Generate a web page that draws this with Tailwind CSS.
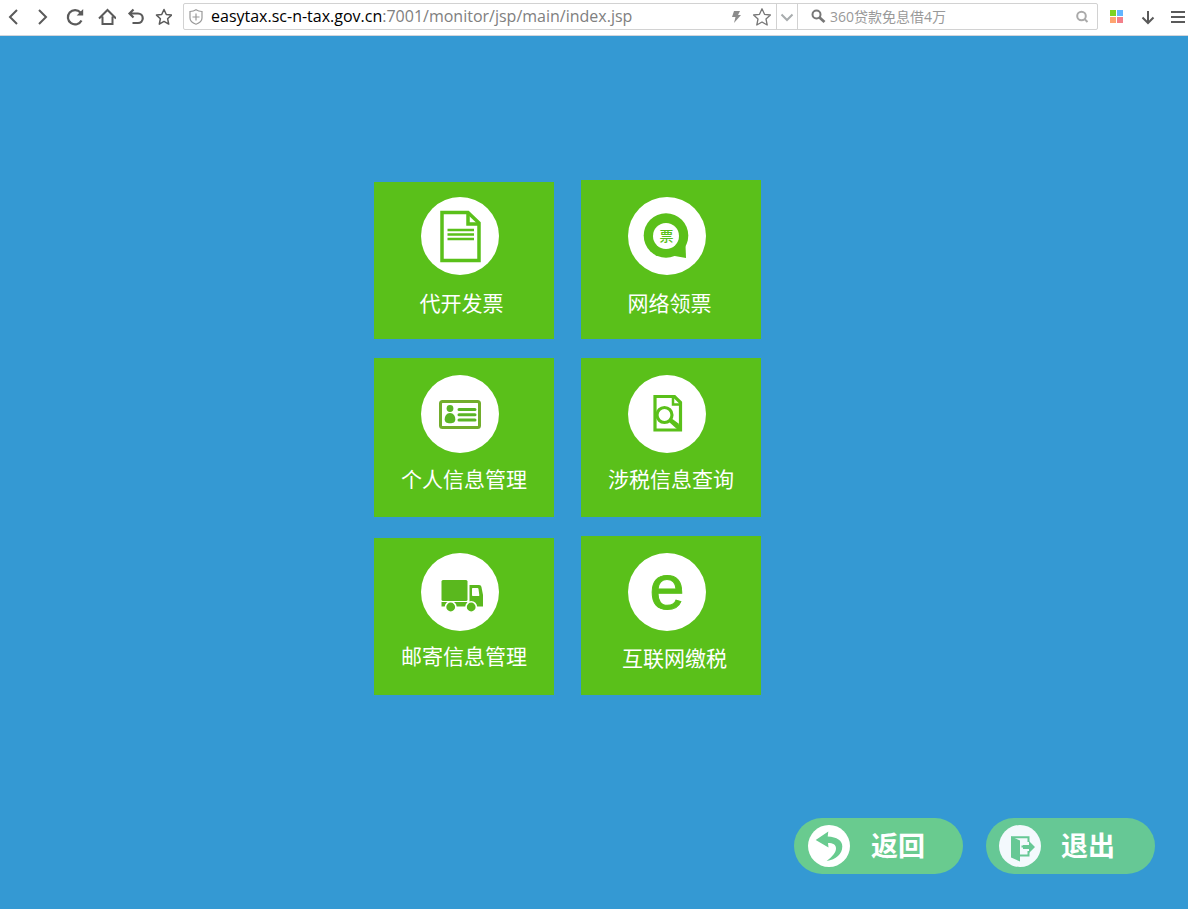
<!DOCTYPE html>
<html lang="zh-CN">
<head>
<meta charset="utf-8">
<meta name="viewport" content="width=device-width, initial-scale=1">
<title>网上办税</title>
<script src="https://cdn.jsdelivr.net/npm/@tailwindcss/browser@4"></script>
</head>
<body class="flex min-h-screen flex-col bg-[#3499d3] font-['Open_Sans','Noto_Sans_CJK_SC',sans-serif]">

<header class="flex h-9 shrink-0 items-center border-b border-gray-300 bg-white pr-[2px] pb-[2px] pl-1 text-[#5a5a5a]">
  <nav class="flex items-center" aria-label="浏览器导航">
    <button type="button" aria-label="后退" class="mr-2"><svg class="size-5" viewBox="0 0 20 20" fill="none" stroke="currentColor" stroke-width="2"><path d="M13 3 6 10l7 7"/></svg></button>
    <button type="button" aria-label="前进" class="mr-3"><svg class="size-5" viewBox="0 0 20 20" fill="none" stroke="currentColor" stroke-width="2"><path d="M7 3l7 7-7 7"/></svg></button>
    <button type="button" aria-label="刷新" class="mr-3"><svg class="size-5" viewBox="0 0 20 20" fill="none" stroke="currentColor" stroke-width="2.2"><path d="M17.500 13.500A7.200 7.200 0 1 1 16.500 5.500"/><path d="M19.200 2v6.500H12.700z" fill="currentColor" stroke="none"/></svg></button>
    <button type="button" aria-label="主页" class="mr-2"><svg class="size-5" viewBox="0 0 20 20" fill="none" stroke="currentColor" stroke-width="2"><path d="M3 11.500 11.500 3 20 11.500M6.500 9.500V17h10V9.500"/></svg></button>
    <button type="button" aria-label="恢复" class="mr-2"><svg class="size-5" viewBox="0 0 20 20" fill="none" stroke="currentColor" stroke-width="2.200"><path d="M9.500 2.500 5.500 6.500l4 4M5.500 6.500h8.500a4.700 4.700 0 0 1 0 9.500H8.500"/></svg></button>
    <button type="button" aria-label="收藏夹" class="mr-[11px]"><svg class="size-5" viewBox="0 0 20 20" fill="none" stroke="currentColor" stroke-width="1.500" stroke-linejoin="round"><path d="M12 2.500l2.300 5 5.200.6-3.900 3.600 1.100 5.400-4.700-2.700-4.700 2.700 1.100-5.400-3.900-3.600 5.200-.6z"/></svg></button>
  </nav>

  <div class="flex h-[27px] min-w-0 flex-1 items-stretch rounded-xs border border-[#d2d2d2]">
    <div class="flex min-w-0 flex-1 items-center pl-1 text-[#999]">
      <svg class="size-4 shrink-0" viewBox="0 0 16 16" fill="none" stroke="currentColor" stroke-width="1.200"><path d="M8 .8C6 2.200 4 2.500 2 2.500V9c0 3 3 5.200 6 6.200C11 14.200 14 12 14 9V2.500C12 2.500 10 2.200 8 .8zM8 4.500v7M4.500 8h7"/></svg>
      <div role="textbox" contenteditable="true" aria-label="网址" class="ml-[7px] min-w-0 flex-1 overflow-hidden pb-[2px] text-base leading-6 whitespace-nowrap text-[#808080] outline-none"><span class="text-black">easytax.sc-n-tax.gov.cn</span>:7001/monitor/jsp/main/index.jsp</div>
      <button type="button" aria-label="极速模式" class="mr-[10px]"><svg class="h-4 w-3" viewBox="0 0 12 16" fill="#8c8c8c"><path d="M4 2h6L8 6h3L4 14l1.500-6H2z"/></svg></button>
      <button type="button" aria-label="收藏此页" class="mr-1"><svg class="size-5" viewBox="0 0 20 20" fill="none" stroke="#777" stroke-width="1.300" stroke-linejoin="round"><path d="M10 1.800l2.500 5.500 5.900.7-4.400 4 1.200 6-5.200-3L4.800 18l1.200-6-4.400-4 5.900-.7z"/></svg></button>
    </div>
    <button type="button" aria-label="网址列表" class="flex w-[22px] items-center justify-center border-x border-[#d2d2d2]"><svg class="size-4" viewBox="0 0 16 16" fill="none" stroke="#a8acae" stroke-width="2"><path d="M2.500 5.500 8 11l5.500-5.500"/></svg></button>
    <form class="flex w-[299px] items-center pr-2 pl-3" onsubmit="return false">
      <svg class="size-4 shrink-0 text-[#777]" viewBox="0 0 16 16" fill="none" stroke="currentColor"><circle cx="6.500" cy="5.500" r="4" stroke-width="2"/><path d="M9.500 8.500l5 4.500" stroke-width="2.800"/></svg>
      <input type="search" aria-label="搜索" placeholder="360贷款免息借4万" class="ml-1 min-w-0 flex-1 bg-transparent text-sm text-gray-700 outline-none placeholder:text-[#999]">
      <button type="submit" aria-label="开始搜索"><svg class="size-[14px]" viewBox="0 0 14 14" fill="none" stroke="#aaa" stroke-width="2"><circle cx="6.500" cy="6" r="4.300"/><path d="M9.500 9l3 3"/></svg></button>
    </form>
  </div>

  <div class="flex items-center pl-3">
    <button type="button" aria-label="扩展" class="mr-4"><svg class="size-[14px]" viewBox="0 0 14 14"><path fill="#7ed321" d="M0 0h6v6H0z"/><path fill="#63b5ff" d="M7 0h6v6H7z"/><path fill="#ffa46f" d="M0 7h6v6H0z"/><path fill="#f37f8a" d="M7 7h6v6H7z"/></svg></button>
    <button type="button" aria-label="下载" class="mr-[14px]"><svg class="size-4" viewBox="0 0 16 16" fill="none" stroke="currentColor" stroke-width="2"><path d="M8 2v11.500M2.500 8.500 8 14l5.500-5.500"/></svg></button>
    <button type="button" aria-label="菜单"><svg class="size-4" viewBox="0 0 16 16" fill="none" stroke="currentColor" stroke-width="2"><path d="M1 3h14M1 8h14M1 13h14"/></svg></button>
  </div>
</header>

<main class="flex flex-1 flex-col justify-between pt-36 pb-[35px] text-white">
  <div class="grid auto-rows-[159px] grid-cols-[180px_180px] items-end justify-center gap-x-[27px] gap-y-[19px] pr-[53px] text-[21px] leading-6">
    <a href="#invoice" class="flex h-[157px] flex-col items-center bg-[#5ac01a] pt-[15px]">
      <svg class="mr-[9px] size-[78px]" viewBox="0 0 78 78"><circle cx="39" cy="39" r="39" fill="#fff"/><g fill="none" stroke="#5ac01a" stroke-width="3.500"><path d="M21 15.500h26L58 26v37.500H21z"/><path d="M47 15v12h12"/><path d="M26.500 33h26.500M26.500 37.500h26.500M26.500 42h26.500" stroke-width="2.400"/></g></svg>
      <span class="mt-4 mr-[5px]">代开发票</span>
    </a>
    <a href="#receive" class="flex h-[159px] flex-col items-center bg-[#5ac01a] pt-[17px]">
      <svg class="mr-[9px] size-[78px]" viewBox="0 0 78 78"><circle cx="39" cy="39" r="39" fill="#fff"/><g fill="#5ac01a"><circle cx="38" cy="38.500" r="22.300"/><path d="M57.500 48 58 61 44 58.500 48 50z"/></g><circle cx="38" cy="39" r="13" fill="#fff"/><text x="38.500" y="44" text-anchor="middle" font-size="14" fill="#5ac01a" font-weight="500">票</text></svg>
      <span class="mt-4 mr-[3px]">网络领票</span>
    </a>
    <a href="#profile" class="flex h-[159px] flex-col items-center bg-[#5ac01a] pt-[17px]">
      <svg class="mr-[9px] size-[78px]" viewBox="0 0 78 78"><circle cx="39" cy="39" r="39" fill="#fff"/><rect x="19.500" y="26.500" width="39" height="26" rx="2" fill="none" stroke="#72ad2c" stroke-width="3"/><g fill="#5ab525"><circle cx="29" cy="33.500" r="3.400"/><path d="M29 38c3.500 0 5.300 3.500 5.300 6.200 0 3-2 4-5.300 4s-5.300-1-5.300-4C23.700 41.500 25.500 38 29 38z"/></g><path d="M38 34.500h16M38 39.700h16M38 45h16" stroke="#5ab525" stroke-width="3" stroke-linecap="round"/></svg>
      <span class="mt-[14px]">个人信息管理</span>
    </a>
    <a href="#query" class="flex h-[159px] flex-col items-center bg-[#5ac01a] pt-[17px]">
      <svg class="mr-[9px] size-[78px]" viewBox="0 0 78 78"><circle cx="39" cy="39" r="39" fill="#fff"/><g fill="none" stroke="#5ac01a" stroke-width="3.200"><path d="M27 21.500h19.500L52.500 27.500v27.500H27z"/><path d="M45 21v8.500H53.500" stroke-width="2.500"/><circle cx="36.500" cy="40" r="7.500" fill="#fff"/></g><path d="M40.500 46.500l4-2.500 6 4.500 2.500 6.500h-3z" fill="#5ac01a"/></svg>
      <span class="mt-[14px]">涉税信息查询</span>
    </a>
    <a href="#mail" class="flex h-[157px] flex-col items-center bg-[#5ac01a] pt-[15px]">
      <svg class="mr-[9px] size-[78px]" viewBox="0 0 78 78"><circle cx="39" cy="39" r="39" fill="#fff"/><g fill="#5ab81e"><rect x="20.500" y="27" width="26" height="21" rx="1.500"/><path fill-rule="evenodd" d="M48.500 32h9.500c1.500 0 2.200.8 2.500 2.200L62 42v11.500H48.500zM52 35c-.6 0-1 .4-1 1v6c0 .6.400 1 1 1h5.500c.6 0 .9-.4.800-1l-.8-6c-.1-.6-.5-1-1-1z"/><path d="M20.500 49h26v4.500h-26z"/><g stroke="#fff" stroke-width="1.600"><circle cx="29.700" cy="54" r="5.200"/><circle cx="50.200" cy="54" r="5.200"/></g></g></svg>
      <span class="mt-[13px]">邮寄信息管理</span>
    </a>
    <a href="#pay" class="flex h-[159px] flex-col items-center bg-[#5ac01a] pt-[17px]">
      <svg class="mr-[9px] size-[78px]" viewBox="0 0 78 78"><circle cx="39" cy="39" r="39" fill="#fff"/><text x="39" y="56" text-anchor="middle" class="font-['Liberation_Sans',sans-serif]" font-size="63" fill="#5ac01a" stroke="#5ac01a" stroke-width="1">e</text></svg>
      <span class="mt-[15px] ml-[7px]">互联网缴税</span>
    </a>
  </div>

  <div class="flex justify-end gap-[23px] pr-[33px] text-[27px] leading-8 font-bold">
    <button type="button" class="flex h-14 w-[169px] items-center rounded-full bg-[#69cb8f] pl-[14px]">
      <svg class="mr-[21px] size-[42px]" viewBox="0 0 42 42"><circle cx="21" cy="21" r="21" fill="#fff"/><path d="M7.700 15 20.300 6.500 19.700 11.500C29 12 34.300 15.500 34.300 21.500 34.300 29 28 34.500 18.700 36 24.500 31.500 28 27.500 28 23.500 28 19.500 25 18 20 18L20.500 22.500z" fill="#69cb8f"/></svg>
      返回
    </button>
    <button type="button" class="flex h-14 w-[169px] items-center rounded-full bg-[#66c895] pl-[13px]">
      <svg class="mr-5 size-[42px]" viewBox="0 0 42 42"><circle cx="21" cy="21" r="21" fill="#f3f9fd"/><path d="M12 11.500l9 4v21l-9-4z" fill="#66c895"/><path d="M12 12.200h17.500V17M29.500 26v4.500H21M22.500 21.500h8" fill="none" stroke="#66c895" stroke-width="2"/><path d="M24 20h6v-4l6 6-6 6v-4h-6z" fill="#66c895"/></svg>
      退出
    </button>
  </div>
</main>
</body>
</html>
